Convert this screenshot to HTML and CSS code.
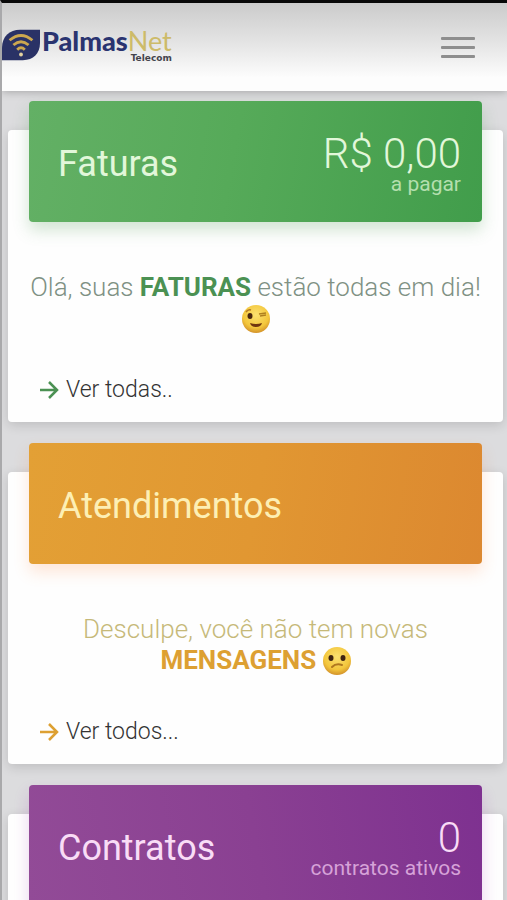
FILE: index.html
```html
<!DOCTYPE html>
<html lang="pt-BR">
<head>
    <meta charset="UTF-8">
    <meta name="viewport" content="width=device-width, initial-scale=1.0">
    <title>PalmasNet Telecom</title>
    <link rel="stylesheet" href="styles.css">
</head>
<body>
    <header class="navbar">
        <a class="brand" href="#" aria-label="PalmasNet Telecom">
            <svg class="brand-icon" viewBox="0 0 40 32" aria-hidden="true">
                <path d="M0 32V19C0 7 8 0 19 0H40V14C40 25 33 32 22 32Z" fill="#2a3266"/>
                <g fill="none" stroke="#cda84f" stroke-width="3">
                    <path d="M8 11Q20 1 32 11"/>
                    <path d="M12 16Q20 9 28 16"/>
                    <path d="M16 21Q20 17 24 21"/>
                </g>
                <circle cx="20" cy="26" r="2" fill="#e4d3a0"/>
            </svg>
            <span class="brand-text">
                <span class="brand-name">Palmas<span class="brand-net">Net</span></span>
                <span class="brand-sub">Telecom</span>
            </span>
        </a>
        <button class="menu-button" type="button" aria-label="Menu">
            <span></span>
            <span></span>
            <span></span>
        </button>
    </header>

    <main class="content">
        <section class="card green">
            <div class="card-header">
                <h2>Faturas</h2>
                <div class="summary">
                    <span class="value">R$ 0,00</span>
                    <span class="label">a pagar</span>
                </div>
            </div>
            <p class="message">Olá, suas <strong>FATURAS</strong> estão todas em dia!
                <svg class="emoji" viewBox="0 0 28 28" role="img" aria-label="Piscadela">
                    <defs>
                        <radialGradient id="face" cx="50%" cy="35%" r="65%">
                            <stop offset="0" stop-color="#fbe170"/>
                            <stop offset="0.7" stop-color="#f3c63c"/>
                            <stop offset="1" stop-color="#d3922a"/>
                        </radialGradient>
                    </defs>
                    <circle cx="14" cy="14" r="14" fill="url(#face)"/>
                    <ellipse cx="8" cy="11" rx="2.5" ry="3" fill="#4a2710"/>
                    <path d="M4 7Q6 4 9 5" fill="none" stroke="#b57a22" stroke-width="1.5"/>
                    <path d="M17 9L24 8M18 11L24 10" fill="none" stroke="#b0801f" stroke-width="1.5"/>
                    <path d="M8 18Q14 20 20 18Q19 22 14 22Q9 22 8 18Z" fill="#70350f"/>
                </svg>
            </p>
            <a class="card-link" href="#">
                <svg class="arrow" viewBox="0 0 20 20" aria-hidden="true"><path d="M1 10H18M10 2L18 10L10 18"/></svg>
                Ver todas..
            </a>
        </section>

        <section class="card orange">
            <div class="card-header">
                <h2>Atendimentos</h2>
            </div>
            <p class="message">Desculpe, você não tem novas <strong>MENSAGENS</strong>
                <svg class="emoji" viewBox="0 0 28 28" role="img" aria-label="Confuso">
                    <circle cx="14" cy="14" r="14" fill="url(#face)"/>
                    <ellipse cx="8" cy="11" rx="2.5" ry="3" fill="#3f2412"/>
                    <ellipse cx="20" cy="11" rx="2.5" ry="3" fill="#3f2412"/>
                    <path d="M9 20Q13 16 19 18" fill="none" stroke="#b0781f" stroke-width="2" stroke-linecap="round"/>
                </svg>
            </p>
            <a class="card-link" href="#">
                <svg class="arrow" viewBox="0 0 20 20" aria-hidden="true"><path d="M1 10H18M10 2L18 10L10 18"/></svg>
                Ver todos...
            </a>
        </section>

        <section class="card purple">
            <div class="card-header">
                <h2>Contratos</h2>
                <div class="summary">
                    <span class="value">0</span>
                    <span class="label">contratos ativos</span>
                </div>
            </div>
        </section>
    </main>
</body>
</html>
```
FILE: styles.css
```css
* {
    box-sizing: border-box;
}
body {
    margin: 0;
    height: 100vh;
    overflow: hidden;
    border-top: 3px solid #080808;
    border-left: 2px solid #a9a9ab;
    background-color: #dcdcde;
    font-family: Roboto, "Noto Sans", sans-serif;
    font-weight: 300;
}
.navbar {
    display: flex;
    align-items: center;
    justify-content: space-between;
    height: 88px;
    padding-right: 32px;
    background: linear-gradient(#cbcbcb, #e4e4e4 45%, #fdfdfd 85%);
    box-shadow: 0 1px 8px rgba(0, 0, 0, 0.25);
}
.brand {
    display: flex;
    align-items: center;
    gap: 2px;
    padding-bottom: 4px;
    text-decoration: none;
    color: #2a3470;
}
.brand-icon {
    width: 38px;
    height: 32px;
}
.brand-text {
    display: flex;
    flex-direction: column;
    align-items: flex-end;
}
.brand-name {
    font-family: Lato, sans-serif;
    font-size: 27px;
    font-weight: 900;
    line-height: 26px;
}
.brand-net {
    font-weight: 400;
    color: #cdbb69;
}
.brand-sub {
    font-family: "DejaVu Sans", sans-serif;
    font-size: 9px;
    font-weight: 700;
    line-height: 8px;
    color: #44444c;
}
.menu-button {
    display: flex;
    flex-direction: column;
    gap: 6px;
    padding: 0;
    border: none;
    background: none;
    cursor: pointer;
}
.menu-button span {
    width: 34px;
    height: 3px;
    border-radius: 1px;
    background-color: #8e8e8e;
}
.content {
    display: flex;
    flex-direction: column;
    gap: 50px;
    padding: 39px 4px 0 6px;
}
.card {
    display: flex;
    flex-direction: column;
    flex-shrink: 0;
    min-height: 292px;
    padding: 0 21px 16px;
    border-radius: 4px;
    background-color: #fefefe;
    box-shadow: 0 3px 12px rgba(0, 0, 0, 0.14);
}
.card-header {
    display: flex;
    align-items: center;
    justify-content: space-between;
    height: 121px;
    margin-top: -29px;
    padding: 4px 21px 0 29px;
    border-radius: 4px;
}
.card-header h2 {
    margin: 0;
    font-size: 36px;
    font-weight: 400;
}
.summary {
    display: flex;
    flex-direction: column;
    align-items: flex-end;
}
.value {
    font-size: 42px;
    line-height: 40px;
}
.label {
    font-size: 21px;
    font-weight: 400;
    line-height: 20px;
}
.message {
    margin: 50px 0 0;
    font-size: 26px;
    line-height: 31px;
    text-align: center;
}
.message strong {
    font-weight: 700;
}
.emoji {
    width: 28px;
    height: 28px;
    vertical-align: -6px;
}
.card-link {
    display: flex;
    align-items: center;
    gap: 7px;
    margin-top: auto;
    padding-left: 10px;
    font-size: 23px;
    line-height: 32px;
    color: #333;
    text-decoration: none;
}
.arrow {
    width: 20px;
    height: 20px;
    fill: none;
    stroke: currentColor;
    stroke-width: 2.5;
}
.green .card-header {
    background: linear-gradient(100deg, #63b065, #56aa59 45%, #419d4b);
    box-shadow: 0 8px 16px rgba(76, 150, 80, 0.25);
    color: #e2f7da;
}
.green .label {
    color: #b4dfae;
}
.green .message {
    color: #7f9184;
}
.green strong,
.green .arrow {
    color: #4b9153;
}
.orange .card-header {
    background: linear-gradient(100deg, #e3a035, #e19732 50%, #dc8830);
    box-shadow: 0 8px 16px rgba(255, 130, 60, 0.2);
    color: #fdefb4;
}
.orange .message {
    color: #c6b979;
}
.orange strong,
.orange .arrow {
    color: #dda032;
}
.purple .card-header {
    background: linear-gradient(80deg, #924b97, #8a4092 50%, #7e3190);
    box-shadow: 0 8px 16px rgba(156, 39, 176, 0.2);
    color: #f9dcf6;
}
.purple .label {
    color: #d6a2d8;
}
```
